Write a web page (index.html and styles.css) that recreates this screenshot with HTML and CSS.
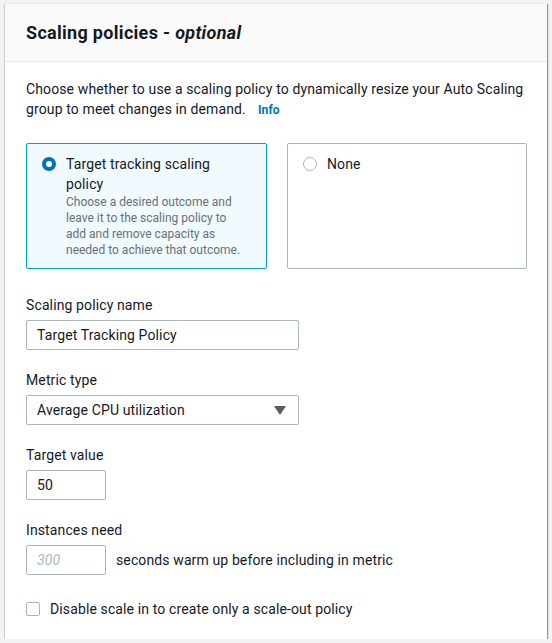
FILE: index.html
```html
<!DOCTYPE html>
<html>
<head>
<meta charset="utf-8">
<link rel="stylesheet" href="styles.css">
</head>
<body>
<div class="card">
  <div class="card-header">
    <h2 class="title">Scaling policies - <em>optional</em></h2>
  </div>
  <div class="card-body">
    <p class="desc">Choose whether to use a scaling policy to dynamically resize your Auto Scaling group to meet changes in demand.<a class="info">Info</a></p>
    <div class="tiles">
      <div class="tile selected">
        <span class="radio checked"></span>
        <div class="tile-text">
          <div class="tile-label">Target tracking scaling policy</div>
          <div class="tile-desc">Choose a desired outcome and leave it to the scaling policy to add and remove capacity as needed to achieve that outcome.</div>
        </div>
      </div>
      <div class="tile">
        <span class="radio"></span>
        <div class="tile-text">
          <div class="tile-label">None</div>
        </div>
      </div>
    </div>
    <div class="field first">
      <div class="label">Scaling policy name</div>
      <div class="input wide">Target Tracking Policy</div>
    </div>
    <div class="field">
      <div class="label">Metric type</div>
      <div class="input wide select">Average CPU utilization<span class="caret"></span></div>
    </div>
    <div class="field">
      <div class="label">Target value</div>
      <div class="input narrow">50</div>
    </div>
    <div class="field">
      <div class="label">Instances need</div>
      <div class="inline">
        <div class="input narrow placeholder">300</div>
        <span class="inline-text">seconds warm up before including in metric</span>
      </div>
    </div>
    <div class="check-row">
      <span class="checkbox"></span>
      <span>Disable scale in to create only a scale-out policy</span>
    </div>
  </div>
</div>
</body>
</html>
```
FILE: styles.css
```css
html, body {
  margin: 0;
  padding: 0;
  background: #f2f3f3;
}
body {
  padding: 3px 5px 0 5px;
  font-family: Roboto, "Liberation Sans", Arial, sans-serif;
  color: #16191f;
  font-size: 14px;
  line-height: 20px;
  letter-spacing: 0.12px;
}
.card {
  width: 542px;
  background: #fff;
  box-shadow: 1px 1px 1px 0 rgba(0,28,36,0.3), 1px 1px 1px 0 rgba(0,28,36,0.15), -1px 1px 1px 0 rgba(0,28,36,0.15);
  border-top: 1px solid #eaeded;
  box-sizing: border-box;
}
.card-header {
  background: #fafafa;
  border-bottom: 1px solid #eaeded;
  padding: 17px 20px 16px 21px;
}
.title {
  margin: 0;
  font-size: 18px;
  line-height: 24px;
  font-weight: 700;
  letter-spacing: 0.3px;
}
.title em {
  font-weight: 700;
  font-style: italic;
}
.card-body {
  padding: 17px 20px 20px 21px;
}
.desc {
  margin: 0;
}
.info {
  display: inline-block;
  color: #0073bb;
  font-weight: 700;
  font-size: 12px;
  line-height: 16px;
  margin-left: 12px;
}
.tiles {
  display: grid;
  grid-template-columns: 241px 240px;
  gap: 20px;
  margin-top: 24px;
}
.tile {
  border: 1px solid #aab7b8;
  border-radius: 2px;
  display: flex;
  gap: 10px;
  padding: 10px 22px 11px 15px;
  height: 126px;
  box-sizing: border-box;
}
.tile.selected {
  border-color: #00a1c9;
  background: #f1faff;
}
.radio {
  width: 14px;
  height: 14px;
  border-radius: 50%;
  border: 1px solid #aab7b8;
  box-sizing: border-box;
  background: #fff;
  margin-top: 3px;
  flex: none;
}
.radio.checked {
  border: 4px solid #0073bb;
}
.tile-text {
  flex: 1;
}
.tile-desc {
  color: #687078;
  font-size: 12px;
  line-height: 16px;
  letter-spacing: 0;
}
.field {
  margin-top: 20px;
}
.field.first {
  margin-top: 26px;
}
.label {
  line-height: 20px;
}
.field .label + * {
  margin-top: 5px;
}
.input {
  border: 1px solid #aab7b8;
  border-radius: 2px;
  height: 30px;
  box-sizing: border-box;
  padding: 4px 10px;
  line-height: 20px;
  background: #fff;
}
.input.wide {
  width: 273px;
}
.input.narrow {
  width: 80px;
}
.select {
  position: relative;
}
.caret {
  position: absolute;
  right: 12px;
  top: 10px;
  width: 0;
  height: 0;
  border-left: 6px solid transparent;
  border-right: 6px solid transparent;
  border-top: 9px solid #545b64;
}
.placeholder {
  color: #aab7b8;
  font-style: italic;
}
.inline {
  display: flex;
  align-items: center;
  gap: 10px;
}
.check-row {
  display: flex;
  align-items: center;
  gap: 10px;
  margin-top: 24px;
}
.checkbox {
  width: 14px;
  height: 14px;
  border: 1px solid #aab7b8;
  border-radius: 2px;
  box-sizing: border-box;
  background: #fff;
}
```
